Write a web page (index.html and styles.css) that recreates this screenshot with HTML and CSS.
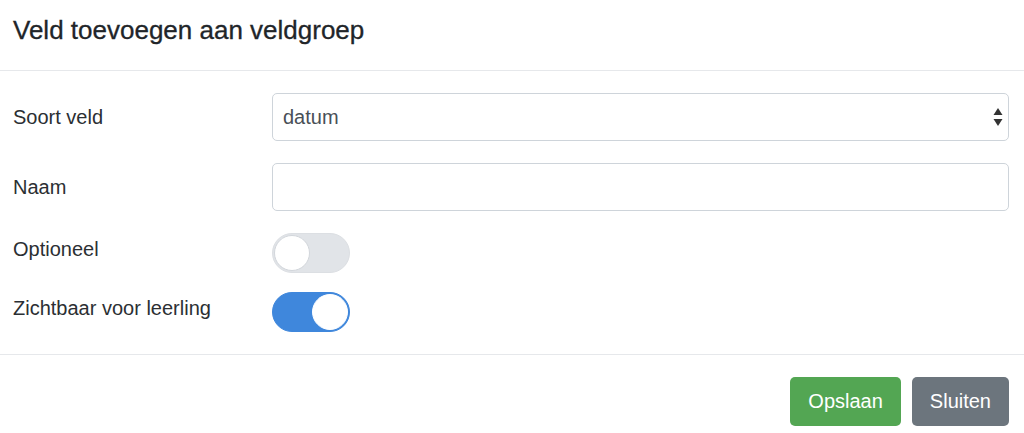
FILE: index.html
```html
<!DOCTYPE html>
<html lang="nl">
<head>
    <meta charset="UTF-8">
    <meta name="viewport" content="width=device-width, initial-scale=1.0">
    <title>Veld toevoegen aan veldgroep</title>
    <link rel="stylesheet" href="styles.css">
</head>
<body>
    <div class="modal">
        <div class="modal-header">
            <h5 class="modal-title">Veld toevoegen aan veldgroep</h5>
        </div>

        <div class="modal-body">
            <div class="form-row">
                <label class="form-label">Soort veld</label>
                <div class="select-wrap">
                    <select class="form-control">
                        <option>datum</option>
                        <option>tekst</option>
                        <option>getal</option>
                    </select>
                    <svg class="select-arrows" width="10" height="18" viewBox="0 0 10 18">
                        <path d="M5 0 L9.5 7 L0.5 7 Z" fill="#333"/>
                        <path d="M5 18 L9.5 11 L0.5 11 Z" fill="#333"/>
                    </svg>
                </div>
            </div>

            <div class="form-row">
                <label class="form-label">Naam</label>
                <input type="text" class="form-control">
            </div>

            <div class="form-row switch-row">
                <label class="form-label">Optioneel</label>
                <span class="switch"></span>
            </div>

            <div class="form-row switch-row">
                <label class="form-label">Zichtbaar voor leerling</label>
                <span class="switch on"></span>
            </div>
        </div>

        <div class="modal-footer">
            <button class="btn btn-success">Opslaan</button>
            <button class="btn btn-secondary">Sluiten</button>
        </div>
    </div>
</body>
</html>
```

FILE: styles.css
```css
body {
    margin: 0;
    font-family: "Liberation Sans", Arial, sans-serif;
    color: #212529;
    background-color: #fff;
}
.modal {
    width: 1024px;
}
.modal-header {
    padding: 15px 15px 25px 13px;
    border-bottom: 1px solid #e6e8eb;
}
.modal-title {
    margin: 0;
    font-size: 26px;
    font-weight: normal;
    line-height: 30px;
    color: #212529;
    -webkit-text-stroke: 0.3px #212529;
}
.modal-body {
    padding: 22px 15px 22px 13px;
}
.form-row {
    display: grid;
    grid-template-columns: 259px 1fr;
    align-items: center;
    margin-bottom: 22px;
}
.form-row:last-child {
    margin-bottom: 0;
}
.form-label {
    font-size: 20px;
    line-height: 24px;
    color: #2b2f33;
}
.switch-row {
    align-items: start;
    margin-bottom: 19px;
}
.switch-row .form-label {
    padding-top: 4px;
}
.form-control {
    box-sizing: border-box;
    width: 100%;
    height: 48px;
    padding: 0 10px;
    font-family: inherit;
    font-size: 20px;
    color: #495057;
    background-color: #fff;
    border: 1px solid #ced4da;
    border-radius: 5px;
    outline: none;
}
select.form-control {
    appearance: none;
    -webkit-appearance: none;
}
.select-wrap {
    position: relative;
}
.select-arrows {
    position: absolute;
    right: 6px;
    top: 15px;
    pointer-events: none;
}
.switch {
    position: relative;
    display: block;
    box-sizing: border-box;
    width: 78px;
    height: 40px;
    border-radius: 20px;
    background-color: #e1e4e8;
    border: 1px solid #dcdfe3;
}
.switch::after {
    content: "";
    position: absolute;
    top: 1px;
    left: 1px;
    box-sizing: border-box;
    width: 36px;
    height: 36px;
    border-radius: 50%;
    background-color: #fff;
    border: 1px solid #d2d6db;
}
.switch.on {
    background-color: #3f87dc;
    border-color: #3f87dc;
}
.switch.on::after {
    left: auto;
    right: 1px;
    border-color: #fff;
}
.modal-footer {
    display: flex;
    justify-content: flex-end;
    gap: 11px;
    padding: 22px 15px 8px 13px;
    border-top: 1px solid #e6e8eb;
}
.btn {
    height: 49px;
    padding: 0 18px;
    font-family: inherit;
    font-size: 20px;
    color: #fff;
    border: none;
    border-radius: 5px;
    cursor: pointer;
}
.btn-success {
    background-color: #53a653;
}
.btn-secondary {
    background-color: #6c757d;
}
```
